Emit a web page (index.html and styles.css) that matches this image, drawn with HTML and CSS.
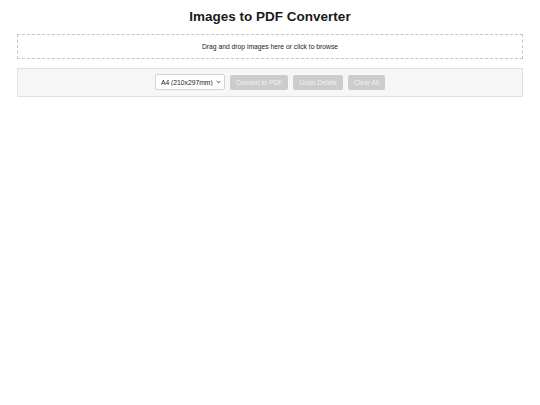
FILE: index.html
```html
<!DOCTYPE html>
<html lang="en">
<head>
<meta charset="utf-8">
<title>Images to PDF Converter</title>
<link rel="stylesheet" href="styles.css">
</head>
<body>
<div class="page">
  <h1 class="title">Images to PDF Converter</h1>
  <div class="dropzone">Drag and drop images here or click to browse</div>
  <div class="controls">
    <div class="select-wrap">
      <select class="size-select">
        <option>A4 (210x297mm)</option>
        <option>Letter (8.5x11in)</option>
      </select>
      <svg class="chevron" width="5" height="4" viewBox="0 0 5 4" aria-hidden="true"><path d="M0.7 1 L2.5 2.8 L4.3 1" fill="none" stroke="#333" stroke-width="0.9"/></svg>
    </div>
    <button class="btn" disabled>Convert to PDF</button>
    <button class="btn" disabled>Undo Delete</button>
    <button class="btn" disabled>Clear All</button>
  </div>
</div>
</body>
</html>
```
FILE: styles.css
```css
html, body {
  margin: 0;
  padding: 0;
  background: #fff;
}
body {
  font-family: "Liberation Sans", Arial, sans-serif;
  color: #222;
}
.page {
  padding: 9px 17px 0 17px;
}
.title {
  margin: 0 0 9.5px 0;
  font-size: 13.5px;
  line-height: normal;
  font-weight: bold;
  text-align: center;
  color: #1a1a1a;
}
.dropzone {
  box-sizing: border-box;
  height: 25px;
  border: 1px dashed #c4c4c4;
  display: flex;
  align-items: center;
  justify-content: center;
  font-size: 6.75px;
  line-height: normal;
  color: #222;
}
.controls {
  box-sizing: border-box;
  height: 29px;
  margin-top: 9px;
  border: 1px solid #e0e0e0;
  background: #f6f6f6;
  display: flex;
  justify-content: center;
  align-items: center;
  gap: 5px;
}
.select-wrap {
  position: relative;
  display: flex;
}
.size-select {
  appearance: none;
  -webkit-appearance: none;
  width: 70px;
  height: 16px;
  box-sizing: border-box;
  border: 1px solid #d4d4d4;
  border-radius: 2px;
  background: #fff;
  font-family: "Liberation Sans", Arial, sans-serif;
  font-size: 6.75px;
  color: #222;
  padding: 0 0 0 5px;
  margin: 0;
}
.chevron {
  position: absolute;
  right: 4px;
  top: 6px;
  pointer-events: none;
}
.btn {
  font-family: "Liberation Sans", Arial, sans-serif;
  font-size: 6.75px;
  line-height: normal;
  height: 15px;
  box-sizing: border-box;
  padding: 0 6px;
  border: none;
  border-radius: 2px;
  background: #cccccc;
  color: #f2f2f2;
  margin: 0;
}
```
